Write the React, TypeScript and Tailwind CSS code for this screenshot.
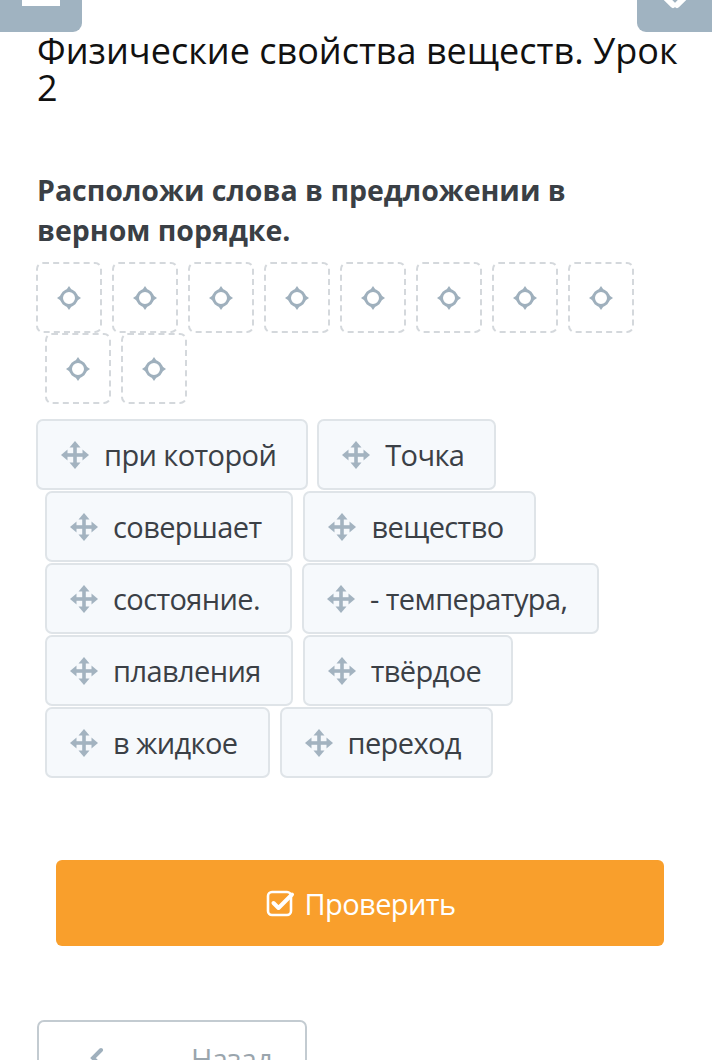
import React from "react";

const MoveIcon = () => (
  <svg width="30" height="30" viewBox="0 0 30 30" className="shrink-0">
    <g fill="#a3b3c0">
      <rect x="13.2" y="6" width="3.6" height="18" />
      <rect x="6" y="13.2" width="18" height="3.6" />
      <polygon points="15,1 20.5,7.5 9.5,7.5" />
      <polygon points="15,29 20.5,22.5 9.5,22.5" />
      <polygon points="1,15 7.5,9.5 7.5,20.5" />
      <polygon points="29,15 22.5,9.5 22.5,20.5" />
    </g>
  </svg>
);

const TargetIcon = () => (
  <svg width="28" height="28" viewBox="0 0 28 28">
    <circle cx="14" cy="14" r="7.5" fill="none" stroke="#9fb0bd" strokeWidth="3" />
    <g fill="#9fb0bd">
      <polygon points="14,2 17.5,7 10.5,7" />
      <polygon points="14,26 17.5,21 10.5,21" />
      <polygon points="2,14 7,10.5 7,17.5" />
      <polygon points="26,14 21,10.5 21,17.5" />
    </g>
  </svg>
);

const CheckSquare = () => (
  <svg width="30" height="30" viewBox="0 0 30 30" className="shrink-0">
    <rect x="3" y="4" width="23" height="23" rx="4" fill="none" stroke="#ffffff" strokeWidth="2.6" />
    <path d="M8.5 15 L13.5 20 L27 6.5" fill="none" stroke="#ffffff" strokeWidth="4" strokeLinecap="round" strokeLinejoin="round" />
  </svg>
);

const Drop = () => (
  <div className="w-[66px] h-[71px] rounded-[7px] border-2 border-dashed border-[#d4d8dc] bg-white flex items-center justify-center shrink-0">
    <TargetIcon />
  </div>
);

const Tile = ({ text }: { text: string }) => (
  <div className="h-[71px] rounded-[7px] border-2 border-[#dfe4e8] bg-[#f6f9fc] flex items-center pl-[22px] pr-[30px] gap-[14px] shrink-0">
    <MoveIcon />
    <span className="text-[29px] tracking-[-0.6px] text-[#3b4046] leading-none whitespace-nowrap">{text}</span>
  </div>
);

export default function App() {
  return (
    <div
      className="w-[712px] h-[1060px] bg-white overflow-hidden relative"
      style={{ fontFamily: '"Open Sans", "Noto Sans", sans-serif' }}
    >
      <div className="flex justify-between h-[32px]">
        <div className="w-[82px] h-[32px] bg-[#a0b3c1] rounded-br-[9px] flex justify-center">
          <div className="w-[38px] h-[6px] bg-white" />
        </div>
        <div className="w-[75px] h-[32px] bg-[#a0b3c1] rounded-bl-[9px] flex justify-center">
          <svg width="30" height="10" viewBox="0 0 30 10">
            <path d="M4 -4 L13 5 M26 -4 L17 5" stroke="#ffffff" strokeWidth="6" strokeLinecap="round" />
          </svg>
        </div>
      </div>

      <h1 className="pl-[37px] pr-[20px] text-[36px] leading-[37px] text-[#111111] font-normal">
        Физические свойства веществ. Урок 2
      </h1>

      <h2 className="pl-[37px] pr-[90px] mt-[64px] text-[28.5px] leading-[40px] font-bold text-[#3a3f45]">
        Расположи слова в предложении в верном порядке.
      </h2>

      <div className="mt-[12px] flex flex-col">
        <div className="flex gap-[10px] pl-[36px]">
          {Array.from({ length: 8 }).map((_, i) => (
            <Drop key={i} />
          ))}
        </div>
        <div className="flex gap-[10px] pl-[45px]">
          <Drop />
          <Drop />
        </div>
      </div>

      <div className="mt-[15px] flex flex-col gap-[1px]">
        <div className="flex gap-[9px] pl-[36px]">
          <Tile text="при которой" />
          <Tile text="Точка" />
        </div>
        <div className="flex gap-[10px] pl-[45px]">
          <Tile text="совершает" />
          <Tile text="вещество" />
        </div>
        <div className="flex gap-[10px] pl-[45px]">
          <Tile text="состояние." />
          <Tile text="- температура," />
        </div>
        <div className="flex gap-[10px] pl-[45px]">
          <Tile text="плавления" />
          <Tile text="твёрдое" />
        </div>
        <div className="flex gap-[10px] pl-[45px]">
          <Tile text="в жидкое" />
          <Tile text="переход" />
        </div>
      </div>

      <div className="mt-[82px] mr-[48px] ml-[56px] h-[86px] rounded-[6px] bg-[#f99f2c] flex items-center justify-center gap-[10px]">
        <CheckSquare />
        <span className="text-[29px] tracking-[-0.6px] text-white leading-none">Проверить</span>
      </div>

      <div className="mt-[74px] ml-[37px] w-[270px] h-[70px] rounded-[7px] border-2 border-[#c3cbd1] bg-white flex items-center pl-[46px] pt-[6px] gap-[80px]">
        <svg width="26" height="26" viewBox="0 0 26 26">
          <path d="M16 5 L8 13 L16 21" fill="none" stroke="#9fb0bd" strokeWidth="4" strokeLinecap="round" />
        </svg>
        <span className="text-[29px] tracking-[-0.6px] text-[#9aa5ad] leading-none">Назад</span>
      </div>
    </div>
  );
}
